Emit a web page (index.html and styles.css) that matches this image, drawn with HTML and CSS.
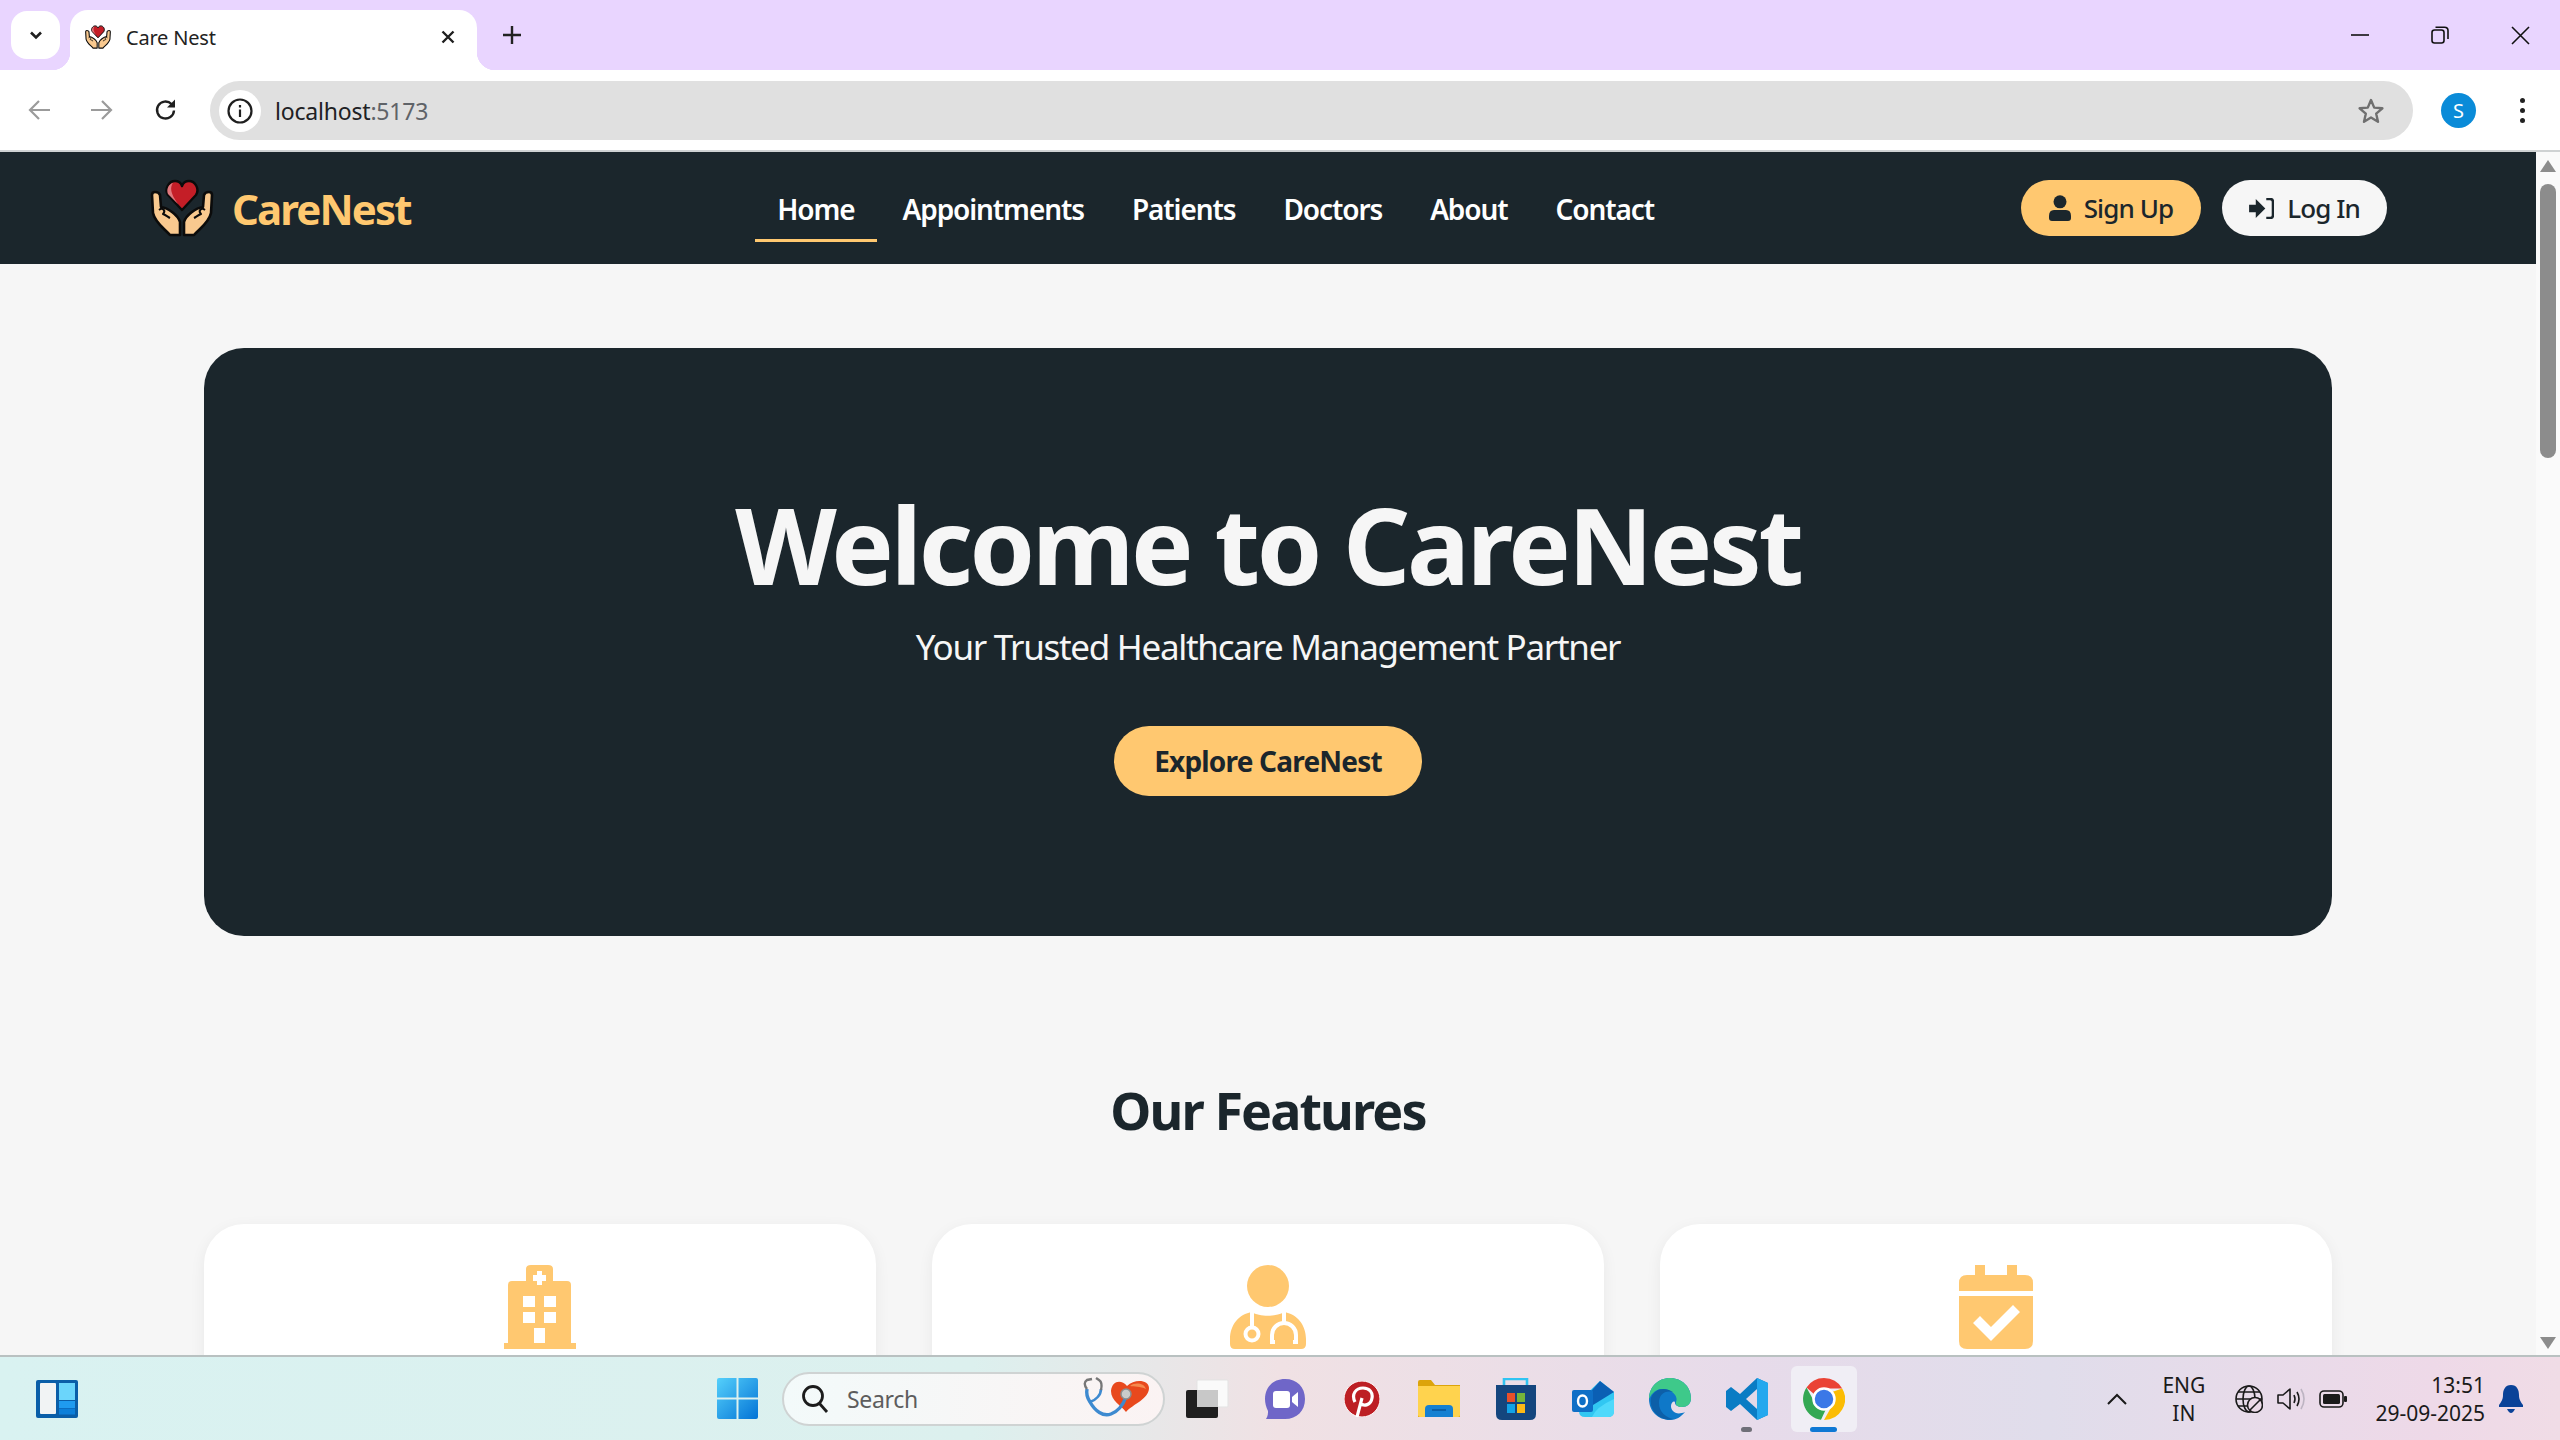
FILE: index.html

```html
<!DOCTYPE html>
<html lang="en">
<head>
  <meta charset="UTF-8">
  <title>Care Nest</title>
  <link rel="stylesheet" href="styles.css">
</head>
<body>
  <svg class="defs" width="0" height="0">
    <symbol id="care-logo" viewBox="9 8 68 62">
      <g fill="#f9c98f" stroke="#0b0b0b" stroke-width="2.6" stroke-linejoin="round">
        <path d="M13 26Q13 23 16 23Q20 23 21 26L22 38C29 39 39 46 41 53L41 66L31 66C26 60 16 54 14 44Z"/>
        <path d="M20 41C24 38 27 42 24 45C27 46 29 48 31 49" fill="none" stroke-width="2"/>
      </g>
      <g fill="#f9c98f" stroke="#0b0b0b" stroke-width="2.6" stroke-linejoin="round">
        <path d="M73 26Q73 23 70 23Q66 23 65 26L64 38C57 39 47 46 45 53L45 66L55 66C60 60 70 54 72 44Z"/>
        <path d="M66 41C62 38 59 42 62 45C59 46 57 48 55 49" fill="none" stroke-width="2"/>
      </g>
      <path d="M43 41L29 26C25 20 30 12 36 12C39 12 42 14 43 17C44 14 47 12 50 12C56 12 61 20 57 26Z" fill="#c41e27" stroke="#0b0b0b" stroke-width="2.4" stroke-linejoin="round"/>
      <path d="M29 25C27 20 30 15 34 14C31 18 31 24 39 35Z" fill="#e0787d"/>
    </symbol>
  </svg>

  <div class="browser">
    <div class="tabstrip">
      <button class="tab-search">
        <svg width="16" height="16" viewBox="0 0 16 16"><path d="M3 5.5L8 10.5L13 5.5" fill="none" stroke="#1f1f1f" stroke-width="2.6"/></svg>
      </button>
      <div class="tab">
        <svg class="favicon" width="28" height="26"><use href="#care-logo"/></svg>
        <span class="tab-title">Care Nest</span>
        <svg class="tab-close" width="14" height="14" viewBox="0 0 14 14"><path d="M1.5 1.5L12.5 12.5M12.5 1.5L1.5 12.5" stroke="#1f1f1f" stroke-width="2.4"/></svg>
      </div>
      <svg class="new-tab" width="18" height="18" viewBox="0 0 18 18"><path d="M9 0V18M0 9H18" stroke="#222" stroke-width="2.4"/></svg>
      <div class="win-controls">
        <svg width="18" height="18" viewBox="0 0 18 18"><path d="M0 9H18" stroke="#111" stroke-width="1.6"/></svg>
        <svg width="18" height="18" viewBox="0 0 18 18" fill="none" stroke="#111" stroke-width="1.6"><rect x="1" y="4" width="12" height="13" rx="2.5"/><path d="M4.5 1.2H13.5Q17 1.2 17 4.5V13"/></svg>
        <svg width="19" height="19" viewBox="0 0 19 19"><path d="M1 1L18 18M18 1L1 18" stroke="#111" stroke-width="1.6"/></svg>
      </div>
    </div>

    <div class="toolbar">
      <svg class="tool-icon" width="22" height="22" viewBox="0 0 22 22" fill="none" stroke="#9b9b9b" stroke-width="2.2"><path d="M22 11H2M11 2L2 11L11 20"/></svg>
      <svg class="tool-icon" width="22" height="22" viewBox="0 0 22 22" fill="none" stroke="#9b9b9b" stroke-width="2.2"><path d="M0 11H20M11 2L20 11L11 20"/></svg>
      <svg class="tool-icon" width="24" height="24" viewBox="0 0 24 24" fill="none" stroke="#1f1f1f" stroke-width="2.4"><path d="M20 12.5A8.5 8.5 0 1 1 17.5 6L20 8.5"/><path d="M21 1.5V9.5H13" fill="#1f1f1f" stroke="none"/></svg>
      <div class="omnibox">
        <span class="site-info">
          <svg width="26" height="26" viewBox="0 0 26 26" fill="none" stroke="#1f1f1f" stroke-width="2.2"><circle cx="13" cy="13" r="11.5"/><path d="M13 11.5V19M13 7V9.5"/></svg>
        </span>
        <span class="url">localhost<span class="url-port">:5173</span></span>
        <svg class="star" width="28" height="28" viewBox="0 0 28 28"><path d="M14 3L17.2 10.6L25.4 11.3L19.2 16.7L21 24.8L14 20.5L7 24.8L8.8 16.7L2.6 11.3L10.8 10.6Z" fill="none" stroke="#6f6f6f" stroke-width="2.4" stroke-linejoin="round"/></svg>
      </div>
      <span class="avatar">S</span>
      <span class="kebab"><i></i><i></i><i></i></span>
    </div>

    <div class="viewport">
      <div class="page">
        <nav class="navbar">
          <a class="brand">
            <svg width="68" height="62"><use href="#care-logo"/></svg>
            <span>CareNest</span>
          </a>
          <ul class="nav-links">
            <li class="active">Home</li>
            <li>Appointments</li>
            <li>Patients</li>
            <li>Doctors</li>
            <li>About</li>
            <li>Contact</li>
          </ul>
          <div class="nav-buttons">
            <button class="btn btn-signup">
              <svg width="22" height="26" viewBox="0 0 22 26" fill="#1b262c"><circle cx="11" cy="6.8" r="6.5"/><path d="M5 15H17Q22 15 22 21V23Q22 26 19 26H3Q0 26 0 23V21Q0 15 5 15Z"/></svg>
              Sign Up
            </button>
            <button class="btn btn-login">
              <svg width="25" height="21" viewBox="0 1 26 22"><path d="M0 8H7V2L17 12L7 22V16H0Z" fill="#1b262c"/><path d="M18 2H22Q25 2 25 5V19Q25 22 22 22H18" fill="none" stroke="#1b262c" stroke-width="2.6"/></svg>
              Log In
            </button>
          </div>
        </nav>

        <section class="hero">
          <h1>Welcome to CareNest</h1>
          <p>Your Trusted Healthcare Management Partner</p>
          <button class="hero-btn">Explore CareNest</button>
        </section>

        <section class="features">
          <h2>Our Features</h2>
          <div class="feature-grid">
            <div class="feature-card">
              <svg width="74" height="84" viewBox="0 0 74 84"><path fill-rule="evenodd" fill="#ffc870" d="M28 0H45Q50 0 50 4V16H64Q68 16 68 20V78H73V84H1V78H5V20Q5 16 9 16H23V4Q23 0 28 0ZM34 6V10H30V16H34V20H39V16H43V10H39V6ZM20 31V42H32V31ZM41 31V42H53V31ZM20 47V58H32V47ZM41 47V58H53V47ZM31 63V78H42V63Z"/></svg>
            </div>
            <div class="feature-card">
              <svg width="76" height="84" viewBox="0 0 76 84">
                <circle cx="38" cy="21" r="21" fill="#ffc870"/>
                <path d="M22 47C9 49 0 60 0 74V79Q0 84 5 84H71Q76 84 76 79V74C76 60 67 49 54 47C47 52 29 52 22 47Z" fill="#ffc870"/>
                <g fill="none" stroke="#fff" stroke-width="4">
                  <path d="M22 46V62"/>
                  <circle cx="22" cy="69" r="6.5"/>
                  <path d="M54 46V58"/>
                  <path d="M45 77H42V70A12 12 0 0 1 66 70V77H63"/>
                </g>
              </svg>
            </div>
            <div class="feature-card">
              <svg width="74" height="84" viewBox="0 0 74 84"><path fill-rule="evenodd" fill="#ffc870" d="M16 0H26V10H48V0H58V10H66Q74 10 74 18V26H0V18Q0 10 8 10H16ZM0 31H74V76Q74 84 66 84H8Q0 84 0 76ZM54 40L32 62L21 51L14 58L32 76L61 47Z"/></svg>
            </div>
          </div>
        </section>
      </div>

      <div class="scrollbar">
        <span class="arrow-up"></span>
        <span class="thumb"></span>
        <span class="arrow-down"></span>
      </div>
    </div>

    <footer class="taskbar">
      <svg class="widgets" width="42" height="38" viewBox="0 0 42 38">
        <rect width="42" height="38" rx="2" fill="#0a5ea8"/>
        <rect x="4" y="3" width="16" height="31" rx="1" fill="#f1f3f4"/>
        <rect x="23" y="3" width="16" height="17" fill="#6bd5fb"/>
        <rect x="23" y="21" width="16" height="7" fill="#1f9bef"/>
        <rect x="23" y="28.5" width="16" height="6" fill="#0c7fd9"/>
      </svg>
      <svg class="start" width="41" height="41" viewBox="0 0 41 41">
        <defs><linearGradient id="win" x1="0" y1="0" x2="1" y2="1"><stop offset="0" stop-color="#55d0fb"/><stop offset="1" stop-color="#0273d6"/></linearGradient></defs>
        <path d="M0 2Q0 0 2 0H19.500V19.500H0ZM21.500 0H39Q41 0 41 2V19.500H21.500ZM0 21.500H19.500V41H2Q0 41 0 39ZM21.500 21.500H41V39Q41 41 39 41H21.500Z" fill="url(#win)"/>
      </svg>
      <div class="search-pill">
        <svg width="28" height="30" viewBox="0 0 28 30" fill="none" stroke="#1c1c1c" stroke-width="2.800"><circle cx="12" cy="12" r="9.500"/><path d="M18.500 19.500L26 28"/></svg>
        <span>Search</span>
        <svg class="search-art" width="68" height="48" viewBox="0 0 68 48">
          <path d="M44 11C38 4 29 6 28 16C28 26 38 30 43 37C50 29 66 24 66 13C66 5 52 3 44 11Z" fill="#e8491d"/>
          <path d="M47 11C52 7 61 8 63 14C57 11 51 12 47 11Z" fill="#f58a4e"/>
          <path d="M4 14C3 19 5 24 7 27C12 36 20 42 28 39C36 36 40 30 43 22" fill="none" stroke="#3d8ad0" stroke-width="3.400"/>
          <path d="M18 14C18 20 13 25 7 27" fill="none" stroke="#3d8ad0" stroke-width="2.600"/>
          <path d="M4 14C1 10 1 7 4 5L9 4M13 3L16 5C19 7 19 11 18 15" fill="none" stroke="#777" stroke-width="2.400"/>
          <circle cx="43" cy="19" r="5" fill="#c9ccca" stroke="#8d8d8d" stroke-width="1.500"/>
        </svg>
      </div>
      <div class="task-icons">
        <span class="task-icon">
          <svg width="44" height="40" viewBox="0 0 44 40"><rect x="11" y="1" width="31" height="27" rx="1" fill="#fafafa" stroke="#e3e3e3"/><rect x="0" y="11" width="32" height="28" rx="2" fill="#1f1f1f"/><rect x="11" y="11" width="21" height="17" fill="#c8c8c8"/></svg>
        </span>
        <span class="task-icon">
          <svg width="40" height="40" viewBox="0 0 40 40"><path d="M20 0C32 0 40 8 40 20C40 32 32 40 20 40H1C3 37 3 34 3 32C1 28 0 24 0 20C0 8 8 0 20 0Z" fill="#6f66c8"/><rect x="8" y="12" width="17" height="17" rx="3" fill="#fff"/><path d="M27 18L33 13V28L27 23Z" fill="#fff"/></svg>
        </span>
        <span class="task-icon">
          <svg width="36" height="36" viewBox="0 0 36 36"><circle cx="18" cy="18" r="18" fill="#bd1f24" stroke="#fff" stroke-width="1"/><path d="M13 36L18 17M11 21C7 13 12 7 19 7C26 7 29 12 28 17C27 24 20 26 16 22" fill="none" stroke="#fff" stroke-width="3.200"/></svg>
        </span>
        <span class="task-icon">
          <svg width="42" height="37" viewBox="0 0 42 37"><path d="M0 2Q0 0 2 0H13L17 5H42V37H0Z" fill="#dca40c"/><path d="M0 6H42V35Q42 37 40 37H2Q0 37 0 35Z" fill="#ffd34e"/><path d="M7 37V29Q7 25 11 25H31Q35 25 35 29V37Z" fill="#1580d2"/><path d="M14 30H28" stroke="#0b5fa8" stroke-width="2"/></svg>
        </span>
        <span class="task-icon">
          <svg width="40" height="42" viewBox="0 0 40 42"><path d="M8 8V1H31V8" fill="none" stroke="#2fc4f2" stroke-width="2.600"/><path d="M0 7H40V36Q40 42 34 42H6Q0 42 0 36Z" fill="#14467e"/><rect x="11" y="15" width="8" height="9" fill="#e8502a"/><rect x="21" y="15" width="8" height="9" fill="#75b53a"/><rect x="11" y="26" width="8" height="9" fill="#12a3e8"/><rect x="21" y="26" width="8" height="9" fill="#fdba16"/></svg>
        </span>
        <span class="task-icon">
          <svg width="42" height="36" viewBox="0 0 42 36"><path d="M7 20L28 0L42 11V30Q42 36 36 36H13Q7 36 7 30Z" fill="#31c7f2"/><path d="M20 9L28 0L42 11L21 24Z" fill="#0b5fb4"/><path d="M20 36Q24 26 42 18V30Q42 36 36 36Z" fill="#4fd9fb"/><rect x="0" y="9" width="21" height="22" rx="2" fill="#0f6fc6"/><ellipse cx="10.500" cy="20" rx="4.500" ry="5.500" fill="none" stroke="#fff" stroke-width="2.400"/></svg>
        </span>
        <span class="task-icon">
          <svg width="42" height="42" viewBox="0 0 42 42"><path d="M21 0C33 0 42 9 42 20C42 26 38 29 33 29C29 29 26 27 26 25C26 22 22 24 22 28C22 33 27 38 36 34C32 39 27 42 21 42C9 42 0 33 0 21C0 9 9 0 21 0Z" fill="#0f78c8"/><path d="M21 0C33 0 42 9 42 20C42 26 38 29 33 29C29 29 26 27 27 24C30 18 22 10 12 11C5 12 2 17 0 21C0 9 9 0 21 0Z" fill="#3ec98a"/><path d="M2 20C5 11 15 8 24 14C16 12 10 16 10 25C10 34 17 40 25 41C12 44 0 34 2 20Z" fill="#0d5fa8"/></svg>
        </span>
        <span class="task-icon is-open">
          <svg width="42" height="42" viewBox="0 0 42 42"><path d="M31 0L42 5V37L31 42L14 26L5 33L0 29V13L5 9L14 16Z" fill="#0a7cc4"/><path d="M31 0L42 5V37L31 42Z" fill="#24a8ee"/><path d="M31 11L20 21L31 31Z" fill="#e3d9e8"/></svg>
        </span>
        <span class="task-icon is-active">
          <svg width="42" height="42" viewBox="0 0 42 42">
            <path d="M21 0A21 21 0 0 1 39.200 10.500H21A10.500 10.500 0 0 0 11.500 16.500L3.500 9.500A21 21 0 0 1 21 0Z" fill="#ea4335"/>
            <path d="M39.200 10.500A21 21 0 0 1 21 42L30 26A10.500 10.500 0 0 0 29 14Z" fill="#fbbc04"/>
            <path d="M3.500 9.500L12.500 26A10.500 10.500 0 0 0 23 31L18 41.800A21 21 0 0 1 3.500 9.500Z" fill="#34a853"/>
            <circle cx="21" cy="21" r="10.500" fill="#3b78e7" stroke="#fff" stroke-width="2.500"/>
          </svg>
        </span>
      </div>

      <div class="tray">
        <svg class="tray-caret" width="20" height="12" viewBox="0 0 20 12"><path d="M1 11L10 2L19 11" fill="none" stroke="#1a1a1a" stroke-width="2"/></svg>
        <div class="lang">ENG<br>IN</div>
        <svg width="28" height="28" viewBox="0 0 28 28" fill="none" stroke="#1a1a1a" stroke-width="1.600"><circle cx="14" cy="14" r="13"/><ellipse cx="14" cy="14" rx="6" ry="13"/><path d="M1 14H27M3 7H25M3 21H25"/><circle cx="20" cy="20" r="7.500" fill="#ecdae8"/><path d="M15 25L25 15"/></svg>
        <svg width="28" height="24" viewBox="0 0 28 24" fill="none" stroke="#1a1a1a" stroke-width="1.600"><path d="M1 8H6L13 2V22L6 16H1Z" stroke-linejoin="round"/><path d="M17 8Q19 12 17 16M20 5Q24 12 20 19"/><path d="M24 2Q30 12 24 22" stroke="#bdb4c2"/></svg>
        <svg width="28" height="18" viewBox="0 0 28 18"><rect x="1" y="1" width="23" height="16" rx="4" fill="none" stroke="#1a1a1a" stroke-width="1.600"/><rect x="4" y="4" width="17" height="10" rx="1.500" fill="#1a1a1a"/><rect x="25" y="6" width="3" height="6" rx="1" fill="#1a1a1a"/></svg>
        <div class="clock">13:51<br>29-09-2025</div>
        <svg class="bell" width="24" height="28" viewBox="0 0 24 28" fill="#0a4298"><path d="M12 0C6 0 4 5 4 10C4 15 2 17 0 20V22H24V20C22 17 20 15 20 10C20 5 18 0 12 0Z"/><path d="M8 24H16Q14 28 12 28Q10 28 8 24Z"/></svg>
      </div>
    </footer>
  </div>
</body>
</html>
```

FILE: styles.css

```css
* {
  box-sizing: border-box;
}

html, body {
  margin: 0;
  height: 100%;
  overflow: hidden;
}

body {
  font-family: "Noto Sans", "Open Sans", sans-serif;
  color: #1b262c;
}

.defs {
  position: absolute;
}

button {
  font-family: inherit;
  border: none;
  cursor: pointer;
}

.browser {
  display: flex;
  flex-direction: column;
  height: 100vh;
}

/* tab strip */
.tabstrip {
  height: 70px;
  flex: none;
  display: flex;
  align-items: flex-start;
  background: #e9d5ff;
  padding-left: 11px;
}

.tab-search {
  width: 49px;
  height: 48px;
  margin-top: 11px;
  border-radius: 16px;
  background: #fff;
  display: flex;
  align-items: center;
  justify-content: center;
  padding: 0;
}

.tab {
  position: relative;
  width: 407px;
  height: 60px;
  margin: 10px 0 0 10px;
  padding: 0 22px 6px 14px;
  background: #fff;
  border-radius: 18px 18px 0 0;
  display: flex;
  align-items: center;
}

.tab::before, .tab::after {
  content: "";
  position: absolute;
  bottom: 0;
  width: 18px;
  height: 18px;
}

.tab::before {
  left: -18px;
  background: radial-gradient(circle at 0 0, transparent 18px, #fff 18.5px);
}

.tab::after {
  right: -18px;
  background: radial-gradient(circle at 100% 0, transparent 18px, #fff 18.5px);
}

.tab-title {
  font-size: 20px;
  letter-spacing: -0.2px;
  margin-left: 14px;
  color: #222;
  flex: 1;
}

.new-tab {
  margin: 26px 0 0 26px;
}

.win-controls {
  margin-left: auto;
  padding: 26px 30px 0 0;
  display: flex;
  gap: 62px;
}

/* toolbar */
.toolbar {
  height: 80px;
  flex: none;
  background: #fff;
  border-radius: 18px 18px 0 0;
  display: flex;
  align-items: center;
  padding-left: 28px;
}

.tool-icon {
  margin-right: 41px;
}

.tool-icon:nth-child(3) {
  margin-right: 32px;
}

.omnibox {
  width: 2203px;
  height: 59px;
  margin-top: 1px;
  border-radius: 30px;
  background: #e0e0e0;
  display: flex;
  align-items: center;
  padding: 0 28px 0 9px;
}

.site-info {
  width: 42px;
  height: 42px;
  border-radius: 50%;
  background: #fff;
  display: flex;
  align-items: center;
  justify-content: center;
}

.url {
  font-size: 23px;
  letter-spacing: -0.2px;
  margin-left: 14px;
  color: #202124;
}

.url-port {
  color: #5f6368;
}

.star {
  margin-left: auto;
}

.avatar {
  width: 35px;
  height: 35px;
  margin-left: 28px;
  border-radius: 50%;
  background: #0a8bd8;
  color: #fff;
  font-size: 20px;
  display: flex;
  align-items: center;
  justify-content: center;
}

.kebab {
  margin-left: 44px;
  display: flex;
  flex-direction: column;
  gap: 5px;
}

.kebab i {
  width: 5px;
  height: 5px;
  border-radius: 50%;
  background: #222;
}

/* page */
.viewport {
  flex: 1;
  min-height: 0;
  display: flex;
  overflow: hidden;
  border-top: 2px solid #cfd2d3;
  background: #f6f6f6;
}

.page {
  flex: 1;
  min-width: 0;
  overflow: hidden;
}

.navbar {
  height: 112px;
  padding: 0 149px 0 148px;
  background: #1b262c;
  display: flex;
  align-items: center;
  justify-content: space-between;
}

.brand {
  display: flex;
  align-items: center;
  gap: 16px;
  color: #ffc870;
  font-size: 42px;
  font-weight: 700;
  letter-spacing: -1.9px;
}

.nav-links {
  list-style: none;
  margin: 0;
  padding: 0;
  display: flex;
  gap: 4px;
  color: #fff;
  font-size: 28px;
  font-weight: 600;
  letter-spacing: -1.1px;
}

.nav-links li {
  padding: 15px 22px 11px;
  border-bottom: 3px solid transparent;
}

.nav-links .active {
  border-bottom-color: #ffc870;
}

.nav-buttons {
  display: flex;
  gap: 21px;
}

.btn {
  height: 56px;
  padding: 0 28px;
  border-radius: 28px;
  font-size: 26px;
  font-weight: 500;
  letter-spacing: -0.9px;
  color: #1b262c;
  display: flex;
  align-items: center;
  gap: 13px;
}

.btn-signup {
  background: #ffc870;
}

.btn-login {
  background: #f6f6f6;
  padding: 0 27px;
}

.hero {
  margin: 84px 204px 0;
  height: 588px;
  border-radius: 40px;
  background: #1b262c;
  color: #f6f6f6;
  display: flex;
  flex-direction: column;
  align-items: center;
  padding-top: 134px;
}

.hero h1 {
  margin: 0;
  font-size: 105px;
  line-height: 126px;
  font-weight: 700;
  letter-spacing: -3.3px;
}

.hero p {
  margin: 14px 0 0;
  font-size: 35px;
  line-height: 50px;
  letter-spacing: -1.3px;
}

.hero-btn {
  margin-top: 54px;
  width: 308px;
  height: 70px;
  border-radius: 35px;
  background: #ffc870;
  color: #1b262c;
  font-size: 28px;
  font-weight: 700;
  letter-spacing: -0.8px;
}

.features {
  margin: 0 204px;
}

.features h2 {
  margin: 0;
  padding-top: 136px;
  text-align: center;
  font-size: 52px;
  line-height: 76px;
  font-weight: 700;
  letter-spacing: -1.9px;
}

.feature-grid {
  margin-top: 76px;
  display: grid;
  grid-template-columns: repeat(3, 672px);
  justify-content: space-between;
}

.feature-card {
  height: 320px;
  padding-top: 41px;
  border-radius: 40px;
  background: #fff;
  box-shadow: 0 4px 16px rgba(0, 0, 0, 0.06);
  text-align: center;
}

.scrollbar {
  width: 24px;
  flex: none;
  background: #fafafa;
  display: flex;
  flex-direction: column;
  align-items: center;
  padding-top: 8px;
  padding-bottom: 6px;
}

.arrow-up, .arrow-down {
  width: 0;
  height: 0;
  border-left: 8px solid transparent;
  border-right: 8px solid transparent;
}

.arrow-up {
  border-bottom: 12px solid #8c8c8c;
}

.arrow-down {
  margin-top: auto;
  border-top: 12px solid #8c8c8c;
}

.thumb {
  width: 16px;
  height: 274px;
  margin-top: 12px;
  border-radius: 8px;
  background: #8c8c8c;
}

/* taskbar */
.taskbar {
  height: 85px;
  flex: none;
  display: flex;
  align-items: center;
  border-top: 2px solid #b9c1c1;
  padding-left: 36px;
  background: linear-gradient(90deg, #d9f2f1 0%, #dcf0ee 38%, #f0e1e4 50%, #e7dbea 68%, #e0ddeb 80%, #eed9e8 95%, #f0dce6 100%);
}

.widgets {
  margin-right: 639px;
}

.start {
  margin-right: 24px;
}

.search-pill {
  width: 383px;
  height: 54px;
  border-radius: 27px;
  background: linear-gradient(90deg, #f3fafa, #fbf3f3);
  border: 2px solid #cfd3d3;
  display: flex;
  align-items: center;
  padding: 0 12px 0 17px;
  gap: 18px;
  color: #5d5d5d;
  font-size: 23px;
  letter-spacing: -0.3px;
}

.search-art {
  margin-left: auto;
}

.task-icons {
  margin-left: 10px;
  display: flex;
  gap: 11px;
}

.task-icon {
  position: relative;
  width: 66px;
  height: 66px;
  border-radius: 6px;
  display: flex;
  align-items: center;
  justify-content: center;
}

.task-icon.is-active {
  background: #f0eef5;
}

.is-open::after, .is-active::after {
  content: "";
  position: absolute;
  bottom: 0;
  left: 27px;
  width: 11px;
  height: 5px;
  border-radius: 3px;
  background: #6f6f78;
}

.is-active::after {
  left: 19px;
  width: 27px;
  background: #0f78d4;
}

.tray {
  margin-left: auto;
  padding-right: 37px;
  display: flex;
  align-items: center;
  color: #1a1a1a;
  font-size: 21px;
  line-height: 28px;
}

.lang {
  margin: 0 30px 0 35px;
  text-align: center;
}

.tray svg + svg {
  margin-left: 14px;
}

.clock {
  margin: 0 14px 0 28px;
  text-align: right;
}

.tray .bell {
  margin-left: 0;
}
```
